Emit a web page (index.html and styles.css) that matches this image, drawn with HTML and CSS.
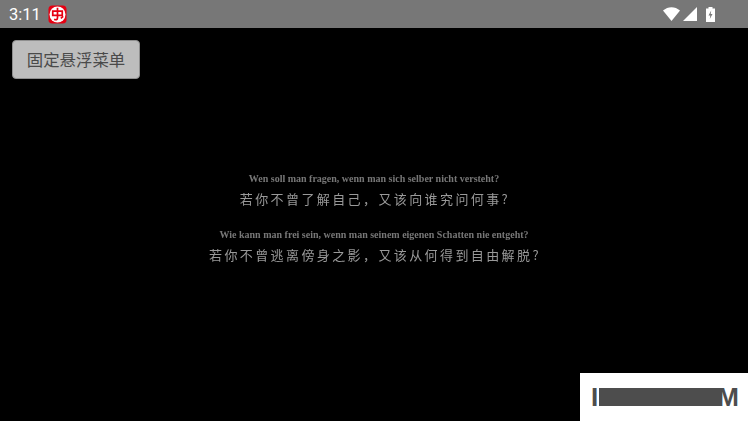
FILE: index.html
```html
<!DOCTYPE html>
<html lang="zh">
<head>
    <meta charset="UTF-8">
    <meta name="viewport" content="width=device-width, initial-scale=1.0">
    <title>固定悬浮菜单</title>
    <link rel="stylesheet" href="styles.css">
</head>
<body>
    <header class="status-bar">
        <span class="clock">3:11</span>
        <svg class="app-icon" width="19" height="19" viewBox="0 0 20 20">
            <rect x="0.5" y="0.5" width="19" height="19" rx="4" fill="#e60012"/>
            <circle cx="10" cy="10" r="8.4" fill="#fff"/>
            <path d="M5 6.500h10v4.500H5zM10 3v10.500c0 2-1.500 2.500-3.500 1.500M13.500 14l2.500-2" fill="none" stroke="#e60012" stroke-width="1.800"/>
        </svg>
        <div class="status-icons">
            <svg class="wifi" width="17" height="14" viewBox="0 0 17 14">
                <path d="M0 3.500C5-1 12-1 17 3.500L8.500 14z" fill="#fff"/>
            </svg>
            <svg class="signal" width="14" height="14" viewBox="0 0 14 14">
                <path d="M0 14 14 0v14z" fill="#fff"/>
            </svg>
            <svg class="battery" width="9" height="15" viewBox="0 0 9 15">
                <path d="M2.500 0h4v1.500H9V15H0V1.500h2.500z" fill="#fff"/>
                <path d="M5.200 3.500 2.500 8.500h1.800L3.800 12l2.700-5H4.700z" fill="#777"/>
            </svg>
        </div>
    </header>

    <main class="screen">
        <button class="float-btn">固定悬浮菜单</button>

        <section class="lyrics">
            <p class="de">Wen soll man fragen, wenn man sich selber nicht versteht?</p>
            <p class="zh">若你不曾了解自己，又该向谁究问何事?</p>
            <p class="de second">Wie kann man frei sein, wenn man seinem eigenen Schatten nie entgeht?</p>
            <p class="zh">若你不曾逃离傍身之影，又该从何得到自由解脱?</p>
        </section>

        <div class="watermark">
            <span class="mark-text">I</span>
            <span class="mark-bar"></span>
            <span class="mark-text">M</span>
        </div>
    </main>
</body>
</html>
```

FILE: styles.css
```css
html, body {
    margin: 0;
    padding: 0;
    height: 100%;
    background-color: #000;
    overflow: hidden;
}

body {
    display: flex;
    flex-direction: column;
    font-family: 'Roboto', 'Noto Sans CJK SC', sans-serif;
}

/* status bar */
.status-bar {
    height: 28px;
    flex: none;
    background-color: #777;
    display: flex;
    align-items: center;
    gap: 7px;
    padding: 0 33px 0 9px;
}

.clock {
    color: #fff;
    font-size: 16.5px;
}

.app-icon {
    display: block;
}

.status-icons {
    margin-left: auto;
    display: flex;
    align-items: center;
    gap: 3px;
}

.status-icons svg {
    display: block;
}

.status-icons .battery {
    margin-left: 6px;
}

/* main area */
.screen {
    position: relative;
    flex: 1;
    background-color: #000;
}

.float-btn {
    position: absolute;
    left: 12px;
    top: 12px;
    width: 128px;
    height: 39px;
    padding: 0 0 2px;
    background-color: #bdbdbd;
    border: 1px solid #8f8f8f;
    border-radius: 4px;
    color: #4a4a4a;
    font-family: 'Noto Sans CJK SC', sans-serif;
    font-size: 16.4px;
}

.lyrics {
    padding-top: 143px;
    text-align: center;
    filter: blur(0.4px);
}

.lyrics p {
    margin: 0;
}

.de {
    font-family: 'Liberation Serif', serif;
    font-size: 10px;
    font-weight: bold;
    line-height: 16px;
    color: #777;
}

.de.second {
    margin-top: 16px;
}

.zh {
    font-family: 'Noto Sans CJK SC', sans-serif;
    font-size: 13px;
    line-height: 24px;
    letter-spacing: 2.400px;
    padding-left: 2px;
    color: #999;
}

/* watermark */
.watermark {
    position: absolute;
    right: 0;
    bottom: 0;
    width: 168px;
    height: 48px;
    background-color: #fff;
    display: flex;
    align-items: center;
    padding-left: 11px;
    box-sizing: border-box;
}

.mark-text {
    color: #4d4d4d;
    font-family: 'Liberation Sans', sans-serif;
    font-weight: bold;
    font-size: 26px;
    line-height: 18px;
}

.mark-bar {
    width: 122px;
    height: 18px;
    margin-left: 1px;
    margin-right: -4px;
    background-color: #4d4d4d;
}
```
